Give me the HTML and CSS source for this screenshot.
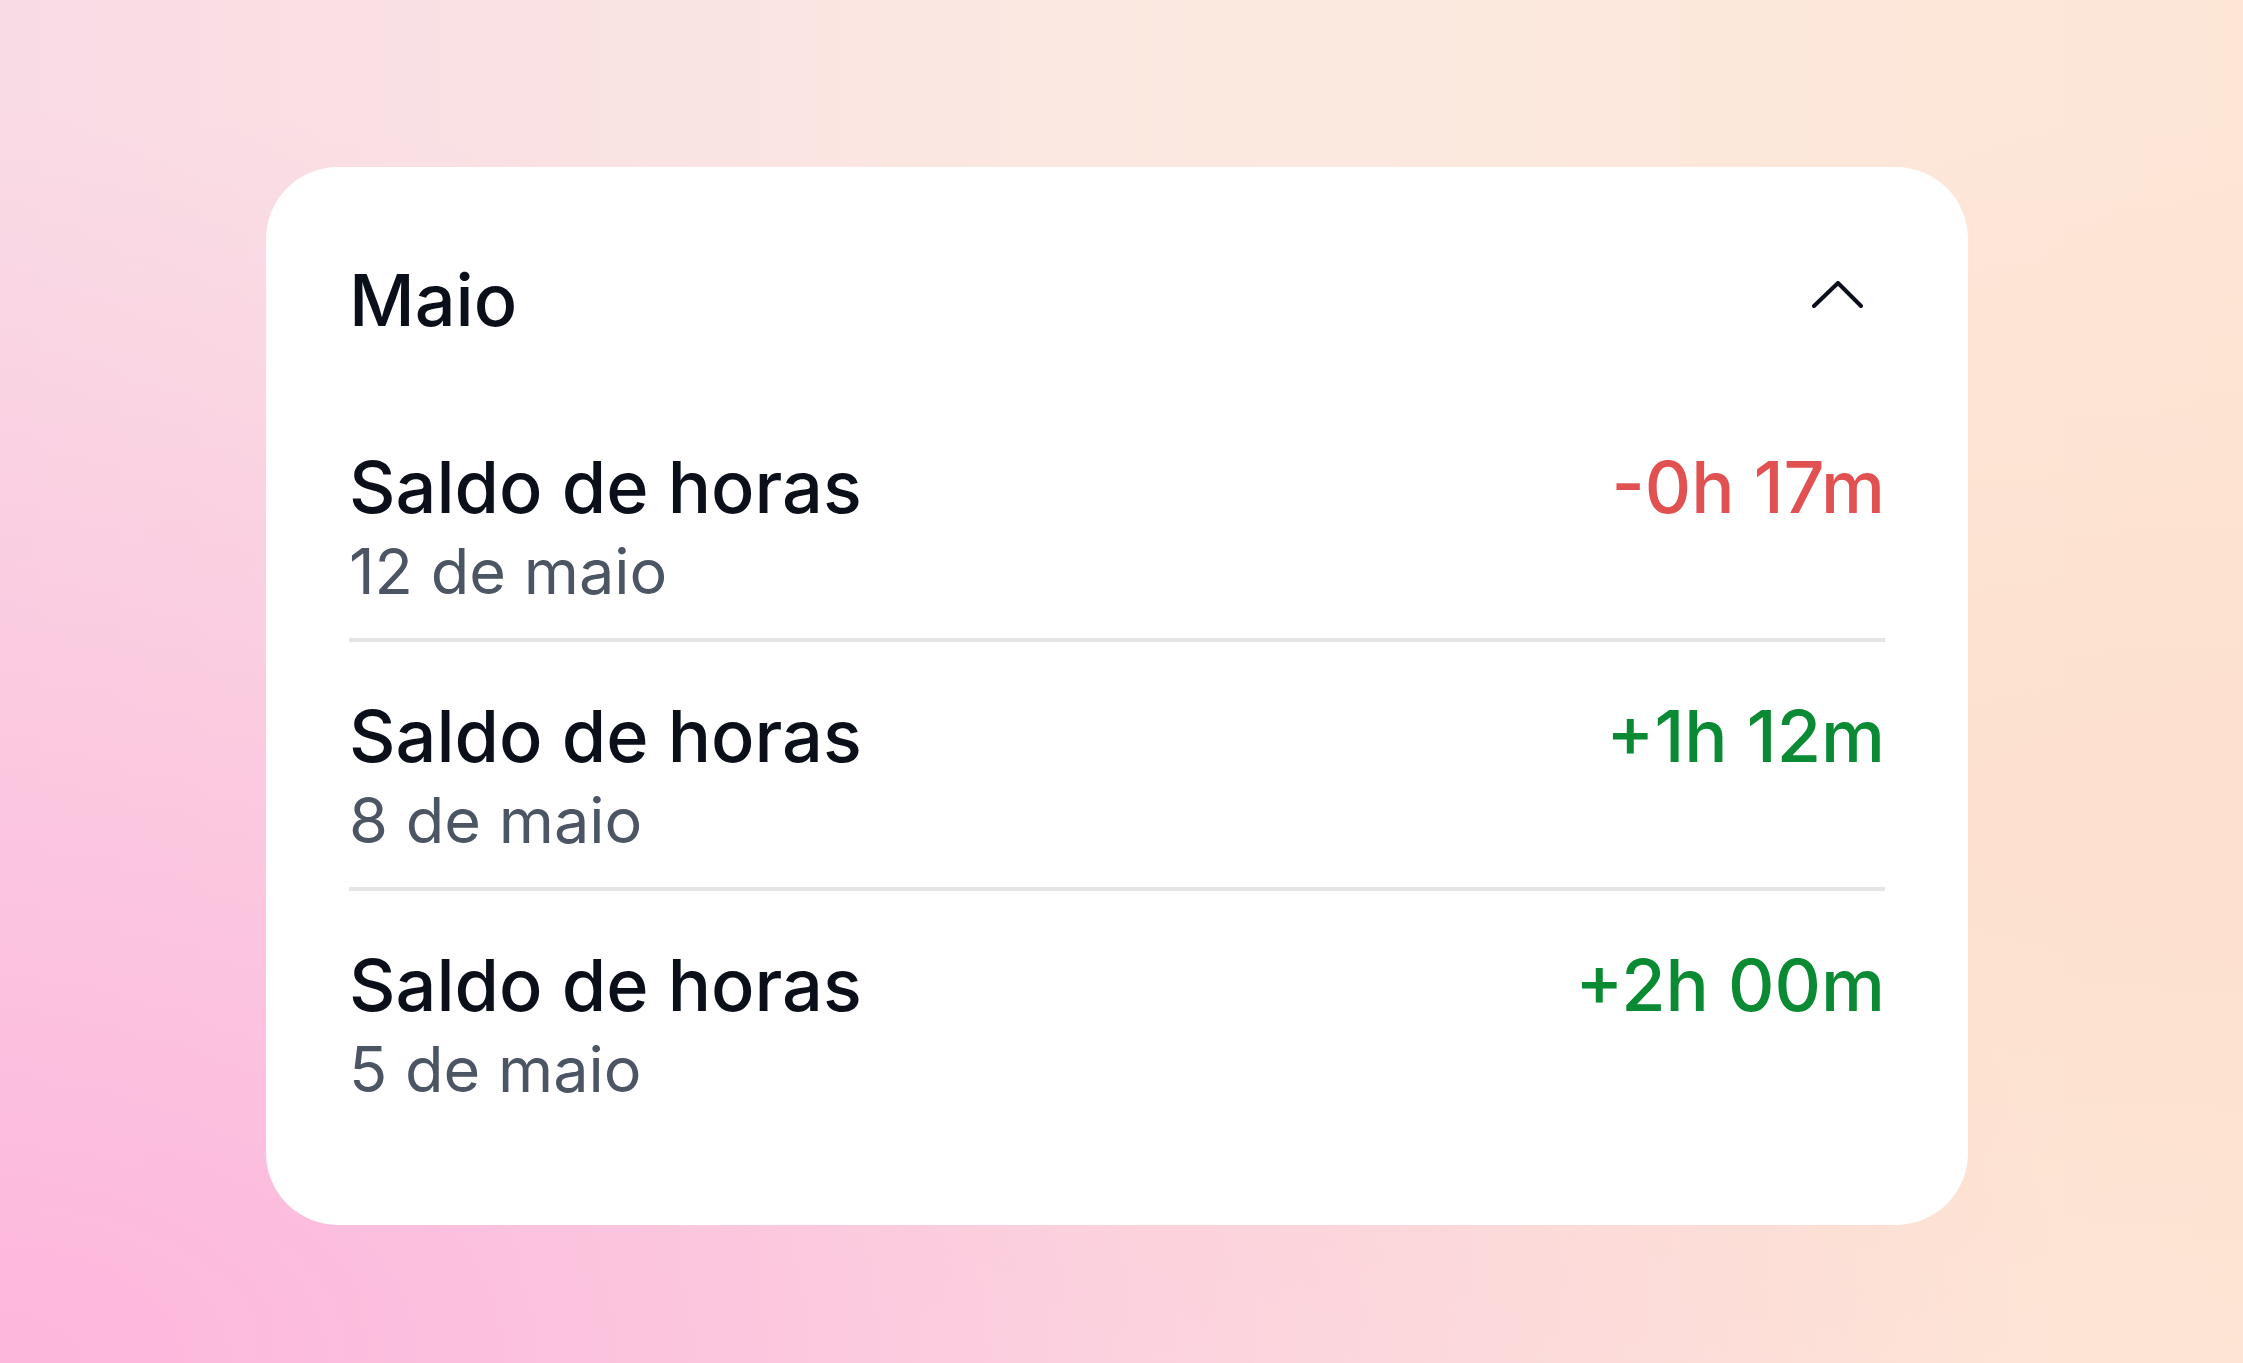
FILE: index.html
```html
<!DOCTYPE html>
<html lang="pt">
<head>
    <meta charset="UTF-8">
    <meta name="viewport" content="width=device-width, initial-scale=1.0">
    <title>Saldo de horas</title>
    <link rel="stylesheet" href="styles.css">
</head>
<body>
    <div class="page">
        <div class="card">
            <div class="card-header">
                <h1 class="month">Maio</h1>
                <svg class="chevron" width="51" height="27" viewBox="0 0 51 27" fill="none">
                    <polyline points="2,25 26,2 49,25" stroke="#0b0f1a" stroke-width="4" stroke-linecap="round" stroke-linejoin="round"/>
                </svg>
            </div>
            <div class="entry">
                <div class="entry-info">
                    <div class="entry-title">Saldo de horas</div>
                    <div class="entry-date">12 de maio</div>
                </div>
                <div class="entry-value negative">-0h 17m</div>
            </div>
            <div class="entry">
                <div class="entry-info">
                    <div class="entry-title">Saldo de horas</div>
                    <div class="entry-date">8 de maio</div>
                </div>
                <div class="entry-value positive">+1h 12m</div>
            </div>
            <div class="entry">
                <div class="entry-info">
                    <div class="entry-title">Saldo de horas</div>
                    <div class="entry-date">5 de maio</div>
                </div>
                <div class="entry-value positive">+2h 00m</div>
            </div>
        </div>
    </div>
</body>
</html>
```

FILE: styles.css
```css
html, body {
    margin: 0;
    height: 100%;
}
body {
    font-family: Inter, "Noto Sans", sans-serif;
    background:
        radial-gradient(ellipse at 0% 100%, #fdb6dc 0%, rgba(253,182,220,0) 65%),
        radial-gradient(ellipse at 100% 60%, #fde0cd 0%, rgba(253,224,205,0) 60%),
        linear-gradient(to right, #f9dbe5, #fbe9e1 50%, #fde6d6);
}
.page {
    padding: 167px 0 0 266px;
}
.card {
    width: 1702px;
    box-sizing: border-box;
    background: #fff;
    border-radius: 72px;
    padding: 91px 83px 89px;
}
.card-header {
    display: flex;
    justify-content: space-between;
    align-items: center;
    margin-bottom: 51px;
}
.month {
    margin: 0;
    font-size: 72px;
    line-height: 84px;
    font-weight: 500;
    color: #0b0f1a;
}
.chevron {
    margin-right: 22px;
    margin-bottom: 11px;
}
.entry {
    display: flex;
    justify-content: space-between;
    align-items: flex-start;
    padding: 52px 0 25px;
    border-bottom: 4px solid #e5e5e5;
}
.entry:first-of-type {
    padding-top: 0;
}
.entry:last-child {
    border-bottom: none;
}
.entry-title {
    font-size: 72px;
    line-height: 84px;
    font-weight: 500;
    color: #0b0f1a;
}
.entry-date {
    font-size: 63px;
    line-height: 84px;
    color: #4b5563;
}
.entry-value {
    font-size: 72px;
    line-height: 84px;
    font-weight: 500;
}
.negative {
    color: #e15151;
}
.positive {
    color: #098a33;
}
```
